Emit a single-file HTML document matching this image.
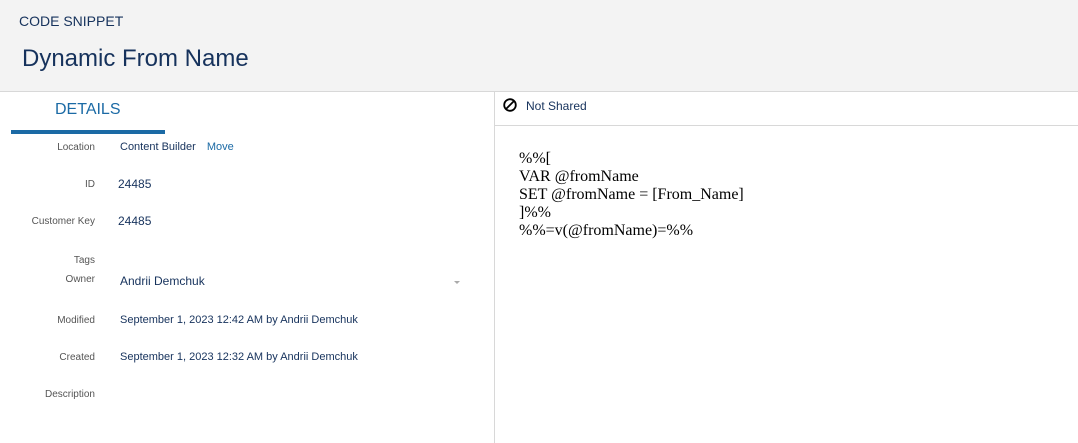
<!DOCTYPE html>
<html><head><style>
*{margin:0;padding:0;box-sizing:border-box}
body{width:1078px;height:443px;overflow:hidden;background:#fff;font-family:"Liberation Sans",Arial,sans-serif;position:relative;color:#16325c}
.hdr{position:absolute;left:0;top:0;width:1078px;height:92px;background:#f3f3f3;border-bottom:1px solid #d8d8d8}
.a{position:absolute;white-space:nowrap}
.lbl{position:absolute;right:983px;font-size:10px;color:#555;white-space:nowrap}
.val{position:absolute;left:120px;font-size:11px;color:#16325c;white-space:nowrap}
</style></head><body>
<div class="hdr"></div>
<div class="a" style="left:19px;top:13px;font-size:14px;color:#16325c">CODE SNIPPET</div>
<div class="a" style="left:22px;top:45px;font-size:24px;color:#16325c">Dynamic From Name</div>
<div style="position:absolute;left:494px;top:92px;width:1px;height:351px;background:#d8d8d8"></div>
<div style="position:absolute;left:495px;top:125px;width:583px;height:1px;background:#d8d8d8"></div>
<div class="a" style="left:55px;top:101px;font-size:16px;color:#1b6aa5">DETAILS</div>
<div style="position:absolute;left:11px;top:130px;width:154px;height:4px;background:#1b6aa5"></div>
<div class="lbl" style="top:142px">Location</div>
<div class="val" style="top:141px">Content Builder <span style="color:#1b6aa5;margin-left:8px">Move</span></div>
<div class="lbl" style="top:179px">ID</div>
<div class="val" style="top:177px;left:118px;font-size:12px">24485</div>
<div class="lbl" style="top:216px">Customer Key</div>
<div class="val" style="top:214px;left:118px;font-size:12px">24485</div>
<div class="lbl" style="top:255px">Tags</div>
<div class="lbl" style="top:274px">Owner</div>
<div class="val" style="top:274px;font-size:12px">Andrii Demchuk</div>
<div class="a" style="left:454px;top:281px;width:0;height:0;border-left:3px solid transparent;border-right:3px solid transparent;border-top:3px solid #aaa"></div>
<div class="lbl" style="top:315px">Modified</div>
<div class="val" style="top:314px">September 1, 2023 12:42 AM by Andrii Demchuk</div>
<div class="lbl" style="top:352px">Created</div>
<div class="val" style="top:351px">September 1, 2023 12:32 AM by Andrii Demchuk</div>
<div class="lbl" style="top:389px">Description</div>
<svg style="position:absolute;left:503px;top:98px" width="14" height="14" viewBox="0 0 14 14"><circle cx="7" cy="7" r="5.8" fill="none" stroke="#000" stroke-width="1.8"/><line x1="3" y1="11" x2="11" y2="3" stroke="#000" stroke-width="1.8"/></svg>
<div class="a" style="left:526px;top:99px;font-size:12px">Not Shared</div>
<div class="a" style="left:519px;top:150px;font-family:'Liberation Serif',serif;font-size:16px;line-height:18px;color:#000">%%[<br>VAR @fromName<br>SET @fromName = [From_Name]<br>]%%<br>%%=v(@fromName)=%%</div>
</body></html>
